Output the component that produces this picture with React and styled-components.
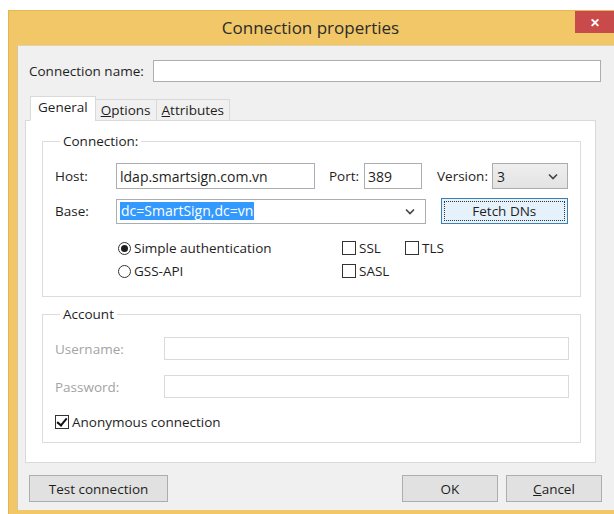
import React from "react";
import styled, { createGlobalStyle } from "styled-components";

const GlobalStyle = createGlobalStyle`
  html, body {
    margin: 0;
    padding: 0;
    background: #ffffff;
  }
  body {
    font-family: "Open Sans", "Noto Sans", sans-serif;
    font-size: 13.5px;
    color: #1e1e1e;
  }
  * {
    box-sizing: border-box;
  }
`;

const Dialog = () => {
  return (
    <Window>
      <TitleBar>
        <span />
        <Title>Connection properties</Title>
        <CloseButton>✕</CloseButton>
      </TitleBar>
      <Client>
        <NameRow>
          <NameLabel>Connection name:</NameLabel>
          <TextBox $width={448} $height={22} />
        </NameRow>

        <TabStrip>
          <Tab $active>General</Tab>
          <Tab>
            <u>O</u>ptions
          </Tab>
          <Tab>
            <u>A</u>ttributes
          </Tab>
        </TabStrip>

        <TabPanel>
          <Group $height={165}>
            <Legend>Connection:</Legend>
            <FieldRow>
              <FieldLabel>Host:</FieldLabel>
              <TextBox $width={199} $height={26}>
                ldap.smartsign.com.vn
              </TextBox>
              <InlineLabel $ml={14} $width={35}>
                Port:
              </InlineLabel>
              <TextBox $width={58} $height={26}>
                389
              </TextBox>
              <InlineLabel $ml={15} $width={55}>
                Version:
              </InlineLabel>
              <VersionSelect>
                <span>3</span>
                <Chevron />
              </VersionSelect>
            </FieldRow>
            <FieldRow $mt={9}>
              <FieldLabel>Base:</FieldLabel>
              <ComboBox>
                <Selected>dc=SmartSign,dc=vn</Selected>
                <Chevron />
              </ComboBox>
              <FetchButton>
                <span>Fetch DNs</span>
              </FetchButton>
            </FieldRow>
            <AuthGrid>
              <Choice>
                <Radio $checked />
                Simple authentication
              </Choice>
              <CheckPair>
                <Choice>
                  <CheckBox />
                  SSL
                </Choice>
                <Choice>
                  <CheckBox />
                  TLS
                </Choice>
              </CheckPair>
              <Choice>
                <Radio />
                GSS-API
              </Choice>
              <Choice>
                <CheckBox />
                SASL
              </Choice>
            </AuthGrid>
          </Group>

          <Group $mt={8} $height={138} $padTop={14}>
            <Legend>Account</Legend>
            <FieldRow $mt={0}>
              <FieldLabel $disabled $width={109}>
                Username:
              </FieldLabel>
              <TextBox $width={405} $height={23} $disabled />
            </FieldRow>
            <FieldRow $mt={15}>
              <FieldLabel $disabled $width={109}>
                Password:
              </FieldLabel>
              <TextBox $width={405} $height={23} $disabled />
            </FieldRow>
            <AnonRow>
              <CheckBox $checked />
              Anonymous connection
            </AnonRow>
          </Group>
        </TabPanel>

        <ButtonBar>
          <PushButton $width={139}>Test connection</PushButton>
          <Spacer />
          <PushButton $width={96}>OK</PushButton>
          <PushButton $width={96}>
            <u>C</u>ancel
          </PushButton>
        </ButtonBar>
      </Client>
    </Window>
  );
};

const Chevron = () => (
  <svg width="10" height="7" viewBox="0 0 10 7">
    <path d="M1 1.5 L5 5.5 L9 1.5" fill="none" stroke="#444" strokeWidth="1.6" />
  </svg>
);

export default function App() {
  return (
    <>
      <GlobalStyle />
      <Dialog />
    </>
  );
}

const Window = styled.div`
  margin: 10px 0 0 8px;
  width: 606px;
  height: 504px;
  background: #f1c767;
  border-left: 1px solid #e3b451;
  border-top: 1px solid #e6b955;
  display: flex;
  flex-direction: column;
`;

const TitleBar = styled.div`
  height: 34px;
  display: grid;
  grid-template-columns: 1fr auto 1fr;
  align-items: start;
`;

const Title = styled.div`
  font-size: 17px;
  line-height: 34px;
  color: #2b2b2b;
  padding-right: 2px;
`;

const CloseButton = styled.div`
  justify-self: end;
  width: 39px;
  height: 22px;
  background: #c94a4a;
  color: #ffffff;
  font-size: 12px;
  font-weight: 700;
  display: flex;
  align-items: center;
  justify-content: center;
`;

const Client = styled.div`
  flex: 1;
  margin: 0 0 4px 8px;
  background: #f0f0f0;
  border-top: 1px solid #e2d3ad;
  border-left: 1px solid #d8c596;
  display: flex;
  flex-direction: column;
`;

const NameRow = styled.div`
  display: flex;
  align-items: center;
  margin-top: 14px;
  padding-left: 11px;
`;

const NameLabel = styled.span`
  width: 124px;
`;

const TextBox = styled.div`
  width: ${(p) => p.$width}px;
  height: ${(p) => p.$height}px;
  background: #ffffff;
  border: 1px solid ${(p) => (p.$disabled ? "#dadada" : "#abadb3")};
  padding: 0 3px;
  display: flex;
  align-items: center;
  white-space: nowrap;
  font-size: 14px;
  flex-shrink: 0;
`;

const TabStrip = styled.div`
  display: flex;
  align-items: flex-end;
  margin-top: 14px;
  padding-left: 12px;
  position: relative;
  z-index: 1;
  margin-bottom: -1px;
`;

const Tab = styled.div`
  height: ${(p) => (p.$active ? 25 : 22)}px;
  padding: 0 ${(p) => (p.$active ? 7 : 5)}px;
  margin-left: ${(p) => (p.$active ? 0 : -1)}px;
  background: ${(p) => (p.$active ? "#ffffff" : "#f0f0f0")};
  border: 1px solid #d9d9d9;
  border-bottom: ${(p) => (p.$active ? "1px solid #ffffff" : "1px solid #d9d9d9")};
  display: flex;
  align-items: center;
  padding-bottom: ${(p) => (p.$active ? 3 : 0)}px;
`;

const TabPanel = styled.div`
  margin-left: 7px;
  width: 571px;
  height: 343px;
  background: #ffffff;
  border: 1px solid #d9d9d9;
  padding: 11px 14px 0 16px;
`;

const Group = styled.fieldset`
  margin: ${(p) => p.$mt || 0}px 0 0 0;
  width: 539px;
  height: ${(p) => p.$height}px;
  border: 1px solid #dcdcdc;
  padding: ${(p) => p.$padTop || 4}px 12px 10px 12px;
  min-width: 0;
`;

const Legend = styled.legend`
  margin-left: 5px;
  padding: 0 3px;
  line-height: 18px;
`;

const FieldRow = styled.div`
  display: flex;
  align-items: center;
  margin-top: ${(p) => (p.$mt === undefined ? 9 : p.$mt)}px;
`;

const FieldLabel = styled.span`
  width: ${(p) => p.$width || 61}px;
  color: ${(p) => (p.$disabled ? "#a3a3a3" : "#1e1e1e")};
  flex-shrink: 0;
`;

const InlineLabel = styled.span`
  margin-left: ${(p) => p.$ml}px;
  width: ${(p) => p.$width}px;
  flex-shrink: 0;
  white-space: nowrap;
`;

const VersionSelect = styled.div`
  width: 80px;
  height: 26px;
  background: linear-gradient(#efefef, #e3e3e3);
  border: 1px solid #acacac;
  display: flex;
  align-items: center;
  justify-content: space-between;
  padding: 0 9px 0 4px;
  font-size: 14px;
`;

const ComboBox = styled.div`
  width: 311px;
  height: 25px;
  background: #ffffff;
  border: 1px solid #abadb3;
  display: flex;
  align-items: center;
  justify-content: space-between;
  padding: 0 10px 0 3px;
  font-size: 14px;
`;

const Selected = styled.span`
  background: #3399ff;
  color: #ffffff;
  line-height: 18px;
  padding: 0 1px;
`;

const FetchButton = styled.div`
  margin-left: 15px;
  width: 128px;
  height: 26px;
  background: #e5f1fb;
  border: 1px solid #3c7fb1;
  padding: 2px;
  display: flex;

  span {
    flex: 1;
    border: 1px dotted #333;
    display: flex;
    align-items: center;
    justify-content: center;
  }
`;

const AuthGrid = styled.div`
  display: grid;
  grid-template-columns: 224px auto;
  grid-auto-rows: 20px;
  row-gap: 3px;
  margin-top: 14px;
  padding-left: 63px;
`;

const CheckPair = styled.div`
  display: grid;
  grid-template-columns: 63px auto;
`;

const Choice = styled.div`
  display: flex;
  align-items: center;
  gap: 3px;
`;

const Radio = styled.span`
  width: 13px;
  height: 13px;
  border-radius: 50%;
  border: 1px solid #333;
  background: #fff;
  display: inline-flex;
  align-items: center;
  justify-content: center;

  &::after {
    content: "";
    width: 7px;
    height: 7px;
    border-radius: 50%;
    background: ${(p) => (p.$checked ? "#1e1e1e" : "transparent")};
  }
`;

const CheckBox = styled.span`
  width: 14px;
  height: 14px;
  border: 1px solid #333;
  background: #fff;
  display: inline-flex;
  align-items: center;
  justify-content: center;
  flex-shrink: 0;

  &::after {
    content: "";
    display: ${(p) => (p.$checked ? "block" : "none")};
    width: 4px;
    height: 8px;
    border: solid #111;
    border-width: 0 2px 2px 0;
    transform: translateY(-1px) rotate(40deg);
  }
`;

const AnonRow = styled.div`
  display: flex;
  align-items: center;
  gap: 3px;
  margin-top: 14px;
  height: 20px;
`;

const ButtonBar = styled.div`
  display: flex;
  gap: 8px;
  margin-top: 12px;
  padding: 0 12px 0 11px;
`;

const Spacer = styled.div`
  flex: 1;
`;

const PushButton = styled.div`
  width: ${(p) => p.$width}px;
  height: 27px;
  background: #e1e1e1;
  border: 1px solid #adadad;
  display: flex;
  align-items: center;
  justify-content: center;
`;
